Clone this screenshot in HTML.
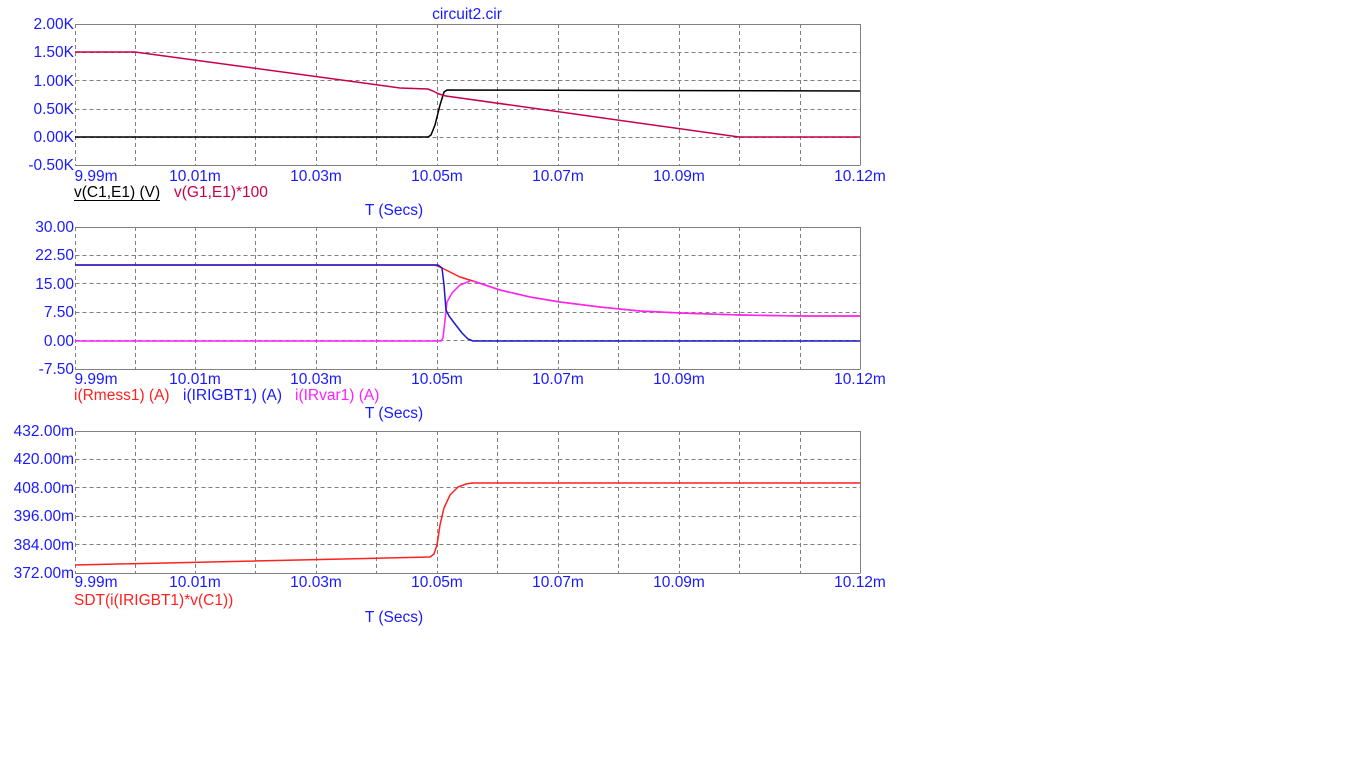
<!DOCTYPE html>
<html><head><meta charset="utf-8"><style>
html,body{margin:0;padding:0;background:#fff;width:1366px;height:768px;overflow:hidden}
svg{display:block}
text{font-family:"Liberation Sans",sans-serif;font-size:15.5px}
</style></head><body>
<svg width="1366" height="768" xmlns="http://www.w3.org/2000/svg">
<defs>
<g id="vgrid" stroke="#808080" stroke-dasharray="4,3" stroke-width="1">
<line x1="135.5" y1="0" x2="135.5" y2="142"/><line x1="195.5" y1="0" x2="195.5" y2="142"/>
<line x1="255.5" y1="0" x2="255.5" y2="142"/><line x1="316.5" y1="0" x2="316.5" y2="142"/>
<line x1="376.5" y1="0" x2="376.5" y2="142"/><line x1="437.5" y1="0" x2="437.5" y2="142"/>
<line x1="497.5" y1="0" x2="497.5" y2="142"/><line x1="558.5" y1="0" x2="558.5" y2="142"/>
<line x1="618.5" y1="0" x2="618.5" y2="142"/><line x1="679.5" y1="0" x2="679.5" y2="142"/>
<line x1="739.5" y1="0" x2="739.5" y2="142"/><line x1="800.5" y1="0" x2="800.5" y2="142"/>
<line x1="75.5" y1="28.5" x2="860" y2="28.5"/><line x1="75.5" y1="56.5" x2="860" y2="56.5"/>
<line x1="75.5" y1="85.5" x2="860" y2="85.5"/><line x1="75.5" y1="113.5" x2="860" y2="113.5"/>
<line x1="75.5" y1="0" x2="75.5" y2="142"/>
</g>
</defs>
<text x="467" y="19" fill="#1a1aff" text-anchor="middle">circuit2.cir</text>

<!-- Plot 1 -->
<g transform="translate(0,24)"><use href="#vgrid"/></g>
<polyline points="75.5,24.5 860.5,24.5 860.5,165.5" fill="none" stroke="#808080"/>
<line x1="75" y1="165.5" x2="860" y2="165.5" stroke="#808080"/>
<g fill="#1a1aff" text-anchor="end">
<text x="74" y="29">2.00K</text><text x="74" y="57">1.50K</text><text x="74" y="86">1.00K</text>
<text x="74" y="114">0.50K</text><text x="74" y="142">0.00K</text><text x="74" y="170">-0.50K</text>
</g>
<g fill="#1a1aff" text-anchor="middle">
<text x="96" y="181">9.99m</text><text x="195" y="181">10.01m</text><text x="316" y="181">10.03m</text>
<text x="437" y="181">10.05m</text><text x="558" y="181">10.07m</text><text x="679" y="181">10.09m</text><text x="860" y="181">10.12m</text>
<text x="394" y="215">T (Secs)</text>
</g>
<text x="74" y="197" fill="#000">v(C1,E1) (V)</text>
<line x1="74" y1="200.5" x2="160" y2="200.5" stroke="#000"/>
<text x="174" y="197" fill="#c8004a">v(G1,E1)*100</text>
<polyline points="75,137 428,137 431,135 435,125 440,105 444,92 447,90 860,91" fill="none" stroke="#000" stroke-width="1.5"/>
<polyline points="75,52 135,52 400,88 428,89 433,91 439,94 446,96 739,137 860,137" fill="none" stroke="#c8004a" stroke-width="1.5"/>

<!-- Plot 2 -->
<g transform="translate(0,227)"><use href="#vgrid"/></g>
<polyline points="75.5,227.5 860.5,227.5 860.5,369.5" fill="none" stroke="#808080"/>
<line x1="75" y1="369.5" x2="860" y2="369.5" stroke="#808080"/>
<g fill="#fff">
<rect x="76" y="370" width="42" height="14"/><rect x="155" y="370" width="80" height="14"/>
<rect x="276" y="370" width="80" height="14"/><rect x="397" y="370" width="80" height="14"/>
<rect x="532" y="370" width="52" height="14"/><rect x="654" y="370" width="51" height="14"/>
<rect x="775" y="370" width="90" height="14"/>
</g>
<g fill="#1a1aff" text-anchor="end">
<text x="74" y="232">30.00</text><text x="74" y="260">22.50</text><text x="74" y="289">15.00</text>
<text x="74" y="317">7.50</text><text x="74" y="346">0.00</text><text x="74" y="374">-7.50</text>
</g>
<g fill="#1a1aff" text-anchor="middle">
<text x="96" y="384">9.99m</text><text x="195" y="384">10.01m</text><text x="316" y="384">10.03m</text>
<text x="437" y="384">10.05m</text><text x="558" y="384">10.07m</text><text x="679" y="384">10.09m</text><text x="860" y="384">10.12m</text>
<text x="394" y="418">T (Secs)</text>
</g>
<text x="74" y="400" fill="#ff2020">i(Rmess1) (A)</text>
<text x="183" y="400" fill="#1a1aff">i(IRIGBT1) (A)</text>
<text x="295" y="400" fill="#ff20ff">i(IRvar1) (A)</text>
<polyline points="75,341 441,341 443,338 445,320 447,302 452,293 460,285 470,281" fill="none" stroke="#ff20ff" stroke-width="1.5"/>
<polyline points="75,265 435,265 440,267 450,272 460,277 473,281 500,290 530,297 560,302 600,307 640,311 680,313 740,315 800,316 860,316" fill="none" stroke="#ff2020" stroke-width="1.5"/>
<polyline points="473,281 500,290 530,297 560,302 600,307 640,311 680,313 740,315 800,316 860,316" fill="none" stroke="#ff20ff" stroke-width="1.5"/>
<polyline points="75,265 438,265 442,268 444,285 446,310 449,316 455,324 462,333 468,339 473,341 860,341" fill="none" stroke="#1a1acc" stroke-width="1.5"/>

<!-- Plot 3 -->
<g transform="translate(0,431)"><use href="#vgrid"/></g>
<polyline points="75.5,431.5 860.5,431.5 860.5,573.5" fill="none" stroke="#808080"/>
<line x1="75" y1="573.5" x2="860" y2="573.5" stroke="#808080"/>
<g fill="#fff">
<rect x="76" y="574" width="42" height="14"/><rect x="155" y="574" width="80" height="14"/>
<rect x="276" y="574" width="80" height="14"/><rect x="397" y="574" width="80" height="14"/>
<rect x="532" y="574" width="52" height="14"/><rect x="654" y="574" width="51" height="14"/>
<rect x="775" y="574" width="90" height="14"/>
</g>
<g fill="#1a1aff" text-anchor="end">
<text x="74" y="436">432.00m</text><text x="74" y="464">420.00m</text><text x="74" y="493">408.00m</text>
<text x="74" y="521">396.00m</text><text x="74" y="550">384.00m</text><text x="74" y="578">372.00m</text>
</g>
<g fill="#1a1aff" text-anchor="middle">
<text x="96" y="587">9.99m</text><text x="195" y="587">10.01m</text><text x="316" y="587">10.03m</text>
<text x="437" y="587">10.05m</text><text x="558" y="587">10.07m</text><text x="679" y="587">10.09m</text><text x="860" y="587">10.12m</text>
<text x="394" y="622">T (Secs)</text>
</g>
<text x="74" y="605" fill="#ff2020">SDT(i(IRIGBT1)*v(C1))</text>
<polyline points="75,565 430,557 434,554 437,545 440,525 444,508 450,495 458,487 466,484 472,483 860,483" fill="none" stroke="#ff2020" stroke-width="1.5"/>
</svg>
</body></html>
